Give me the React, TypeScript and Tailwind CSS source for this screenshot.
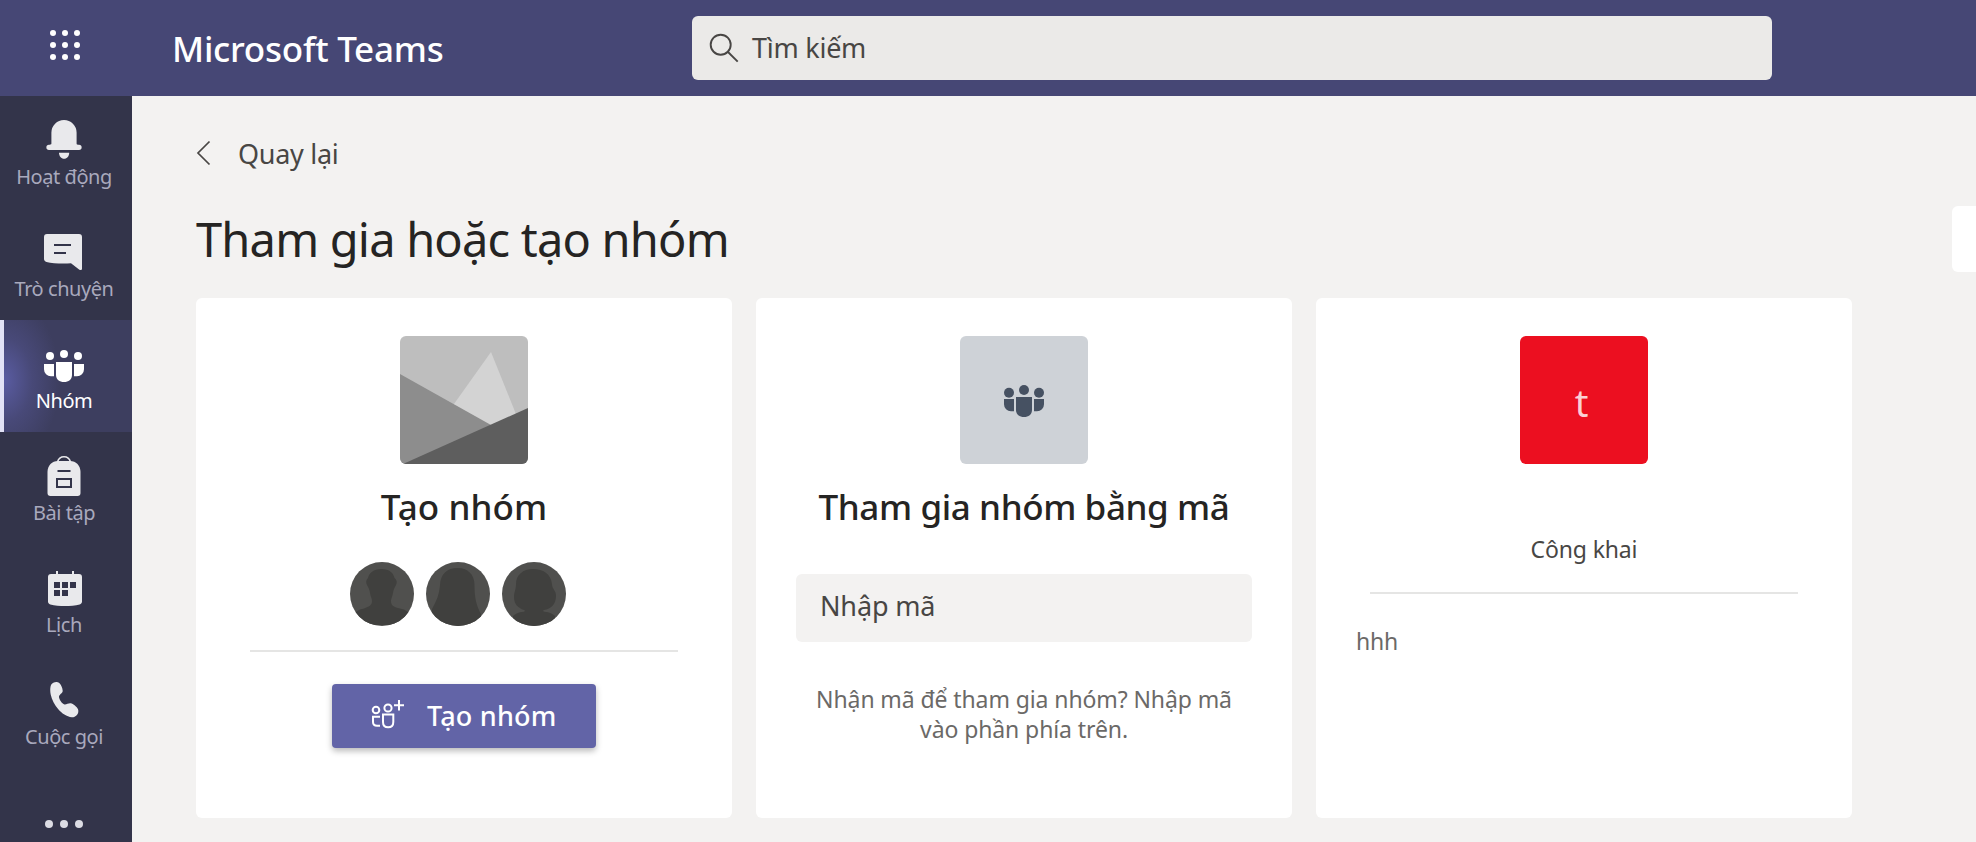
import React from 'react';

const ICON_COLOR = '#e9e9ec';
const ICON_CUT = '#33344a';

interface NavItemProps {
    label: string;
    icon: React.ReactNode;
    active?: boolean;
}

const BellIcon = () => (
    <svg width="40" height="44" viewBox="0 0 40 44" fill={ICON_COLOR}>
        <path d="M20 2A12.6 12.6 0 0 0 7.4 14.6V25.5c0 .8-.6 1.2-1.3 1.2H5a2.65 2.65 0 0 0 0 5.3h30a2.65 2.65 0 0 0 0-5.3h-1.1c-.7 0-1.3-.4-1.3-1.2V14.6A12.6 12.6 0 0 0 20 2z" />
        <path d="M15 34.7h10.2c0 3.4-2.2 6-5.1 6s-5.1-2.6-5.1-6z" />
    </svg>
);

const ChatIcon = () => (
    <svg width="40" height="44" viewBox="0 0 40 44" fill={ICON_COLOR}>
        <path d="M3 4h32a3 3 0 0 1 3 3v31.5c0 1.6-1.3 2-2.6 1.2L27 33.2C18 34 8.5 33.2 2.5 31.9 1 31.5 0 30.5 0 29V7a3 3 0 0 1 3-3z" />
        <path d="M10 15h17M10 23h12" stroke={ICON_CUT} strokeWidth="2" />
    </svg>
);

const TeamsIcon = ({ color, large }: { color: string; large?: boolean }) => (
    <svg width="40" height="44" viewBox="0 0 40 44" fill={color}>
        <circle cx={large ? 5 : 6} cy={large ? 15.7 : 14} r={large ? 5 : 4} />
        <circle cx="20" cy={large ? 13 : 12} r={large ? 5 : 4} />
        <circle cx={large ? 35 : 34} cy={large ? 15.7 : 14} r={large ? 5 : 4} />
        <path d="M0 22h10v12.3H7a7 7 0 0 1-7-7zM30 22h10v5.3a7 7 0 0 1-7 7h-3z" />
        <path d="M12 20h16v13c0 4.5-3.5 7-8 7s-8-2.5-8-7z" />
    </svg>
);

const BackpackIcon = () => (
    <svg width="40" height="44" viewBox="0 0 40 44" fill={ICON_COLOR}>
        <path d="M13.5 8c1-3.5 3.5-5.2 6.5-5.2s5.5 1.7 6.5 5.2" fill="none" stroke={ICON_COLOR} strokeWidth="1.6" />
        <path d="M14 7h12c6 0 10.5 4.500 10.500 11v21a3 3 0 0 1-3 3h-27a3 3 0 0 1-3-3V18C3.500 11.500 8 7 14 7z" />
        <path d="M15.5 7c.8-2 2.5-3 4.5-3s3.700 1 4.500 3z" fill={ICON_CUT} />
        <path d="M13.5 17h13M13 25h14v8H13z" fill="none" stroke={ICON_CUT} strokeWidth="2" />
    </svg>
);

const CalendarIcon = () => (
    <svg width="40" height="44" viewBox="0 0 40 44" fill={ICON_COLOR}>
        <path d="M12 5h2v3h14V5h2v3h5a3 3 0 0 1 3 3v24.5c0 1.5-.8 2.5-2.3 2.9-9 2.2-20.4 2.2-29.4 0C4.8 38 4 37 4 35.5V11a3 3 0 0 1 3-3h5z" />
        <path d="M10 16h6v6h-6zM18 16h6v6h-6zM26 16h6v6h-6zM10 24h6v6h-6zM18 24h6v6h-6z" fill={ICON_CUT} />
    </svg>
);

const PhoneIcon = () => (
    <svg width="40" height="44" viewBox="0 0 40 44" fill={ICON_COLOR}>
        <path d="M9.3 4.7c2-.9 4.6-.9 6 .2 1.8 1.5 3.2 5 3.4 7.8.1 2.6-3.7 3.7-3.7 6 0 2.4 2.8 6.7 5 7.6 2 .8 4.4-1.4 6.7-1 2.6.4 6.2 3.6 7.3 6 .8 1.9.2 4.6-1.3 6-1.3 1.3-3.2 2.2-5 2-4.8-.6-10.2-4-13.4-8C10.8 27.2 7.6 21.5 6.7 16.5 6.3 14 6 11.2 6.5 8.7c.3-1.6 1.3-3.4 2.8-4z" />
    </svg>
);

const NavItem: React.FC<NavItemProps> = ({ label, icon, active }) => (
    <button
        className={`relative flex h-28 w-full shrink-0 flex-col items-center pt-[22px] pr-1 ${
            active
                ? 'bg-[#3d3e5f] bg-[radial-gradient(ellipse_56px_84px_at_4px_60px,#5a5ca2_0%,#484978_50%,#3d3e5f_100%)] text-white'
                : 'text-[#a9a9bd]'
        }`}
    >
        {active && <span className="absolute inset-y-0 left-0 w-1 bg-[#e2e2f6]" />}
        {icon}
        <span className="mt-[1px] text-[20px] leading-[28px] tracking-[-0.45px] whitespace-nowrap">{label}</span>
    </button>
);

const Card = ({ children }: { children: React.ReactNode }) => (
    <section className="flex h-[520px] w-[536px] shrink-0 flex-col items-center rounded-md bg-white pt-[38px]">
        {children}
    </section>
);

const Avatar = ({ shape }: { shape: string }) => (
    <svg className="rounded-full" width="64" height="64" viewBox="0 0 64 64">
        <rect width="64" height="64" fill="#50504e" />
        <path d={shape} fill="#40403e" />
    </svg>
);

const AVATARS = [
    'M31.500 7c8 0 12 4 13 9 2.500 2 2.800 4.500 1.500 7-1.500 3-2.500 4-3 8-.4 3.500-2 5-2 8 0 5 3 6 9 7.500 5 1 7 2.500 9 4.500v12H5V51c2-2 4-3.500 9-4.500 5-2 8-3 8-7.500 0-3-1.600-4.500-2-8-.5-4-1.500-5-3-8-1.300-2.500-1-5 1-7 1-5 5.500-9 13.500-9z',
    'M31.5 6c10 0 17 6 17 17 0 12 1.5 20 6.5 29v12H6V47c5-9 7-14 8-24C14.5 12 21 6 31.5 6z',
    'M31 7c10 0 18 5 19 15 0 5 4 6 4 12 0 8-5 13-12 14-2 1 0 2 3 2 4 1 6 2 8 4v10H11V54c2-2 4-3 8-4 3 0 5-1 3-2-6-2-10-6-10-13 0-5 2-7 2-13C14 13 21 7 31 7z'
];

export default function App() {
    return (
        <div className="flex h-[842px] w-[1976px] flex-col overflow-hidden bg-[#f3f2f1] font-['Noto_Sans','Open_Sans',sans-serif]">
            {/* Top bar */}
            <header className="flex h-24 shrink-0 items-center bg-[#464775]">
                <div className="flex w-[132px] justify-center pb-[6px]">
                    <svg width="32" height="32" viewBox="0 0 32 32" fill="#fff">
                        {[4, 16, 28].map((y) => [3, 15, 27].map((x) => <circle key={`${x}-${y}`} cx={x} cy={y} r="3" />))}
                    </svg>
                </div>
                <h1 className="w-[560px] pt-0.5 pl-10 text-[35px] font-medium tracking-[-0.25px] text-white">Microsoft Teams</h1>
                <div className="flex h-16 w-[1080px] items-center rounded-md bg-[#ebeae8] pl-4 text-[#484644]">
                    <svg width="32" height="32" viewBox="0 0 32 32" fill="none" stroke="#484644" strokeWidth="1.9">
                        <circle cx="12.7" cy="12.7" r="10" />
                        <path d="M20 20l9.7 9.7" />
                    </svg>
                    <span className="ml-3 text-[27px] tracking-[-0.25px]">Tìm kiếm</span>
                </div>
            </header>

            <div className="flex min-h-0 flex-1">
                {/* App rail */}
                <nav className="flex w-[132px] shrink-0 flex-col overflow-hidden bg-[#33344a]">
                    <NavItem label="Hoạt động" icon={<BellIcon />} />
                    <NavItem label="Trò chuyện" icon={<ChatIcon />} />
                    <NavItem label="Nhóm" icon={<TeamsIcon color="#fff" />} active />
                    <NavItem label="Bài tập" icon={<BackpackIcon />} />
                    <NavItem label="Lịch" icon={<CalendarIcon />} />
                    <NavItem label="Cuộc gọi" icon={<PhoneIcon />} />
                    <div className="flex justify-center gap-[7px] pt-[52px] pr-1">
                        <span className="size-2 rounded-full bg-[#dcdce4]" />
                        <span className="size-2 rounded-full bg-[#dcdce4]" />
                        <span className="size-2 rounded-full bg-[#dcdce4]" />
                    </div>
                </nav>

                <main className="flex min-w-0 flex-1 flex-col pl-16">
                    <div className="mt-9 flex h-11 items-center text-[#484644]">
                        <svg width="16" height="28" viewBox="0 0 16 28" fill="none" stroke="#484644" strokeWidth="1.7">
                            <path d="M13.5 1.5L2 13l11.5 11.5" />
                        </svg>
                        <span className="ml-[26px] text-[27px] tracking-[-0.3px]">Quay lại</span>
                    </div>

                    <div className="mt-[30px] flex h-[66px] justify-between">
                        <h2 className="text-[47px] leading-[66px] tracking-[-0.8px] text-[#252423]">Tham gia hoặc tạo nhóm</h2>
                        <div className="h-[66px] w-6 rounded-l-md bg-white" />
                    </div>

                    <div className="mt-[26px] flex gap-6">
                        {/* Create team */}
                        <Card>
                            <svg className="rounded-md" width="128" height="128" viewBox="0 0 128 128">
                                <rect width="128" height="128" fill="#bebebe" />
                                <path d="M91 16L54 68v30h70z" fill="#d3d3d3" />
                                <path d="M0 38l91 51v39H0z" fill="#8d8d8d" />
                                <path d="M3 128L128 72v56z" fill="#5e5e5e" />
                            </svg>
                            <h3 className="mt-[19px] text-[35px] leading-[48px] font-medium tracking-[0.1px] text-[#252423]">Tạo nhóm</h3>
                            <div className="mt-[31px] mr-3 flex gap-3">
                                {AVATARS.map((shape) => <Avatar key={shape} shape={shape} />)}
                            </div>
                            <div className="mt-6 h-0.5 w-[428px] bg-[#e5e5e4]" />
                            <button className="mt-8 flex h-16 w-[264px] items-center rounded bg-[#6264a7] pl-[38px] text-white shadow-[0_3px_6px_rgba(0,0,0,0.28)]">
                                <svg width="36" height="36" viewBox="0 0 36 36" fill="none" stroke="#fff" strokeWidth="2">
                                    <circle cx="6" cy="12" r="3.3" />
                                    <circle cx="18" cy="10" r="3.6" />
                                    <path d="M29 2v10.6M24 7.2h10" />
                                    <path d="M10 18.7H3V24c0 2 1.5 3.7 4 3.7h3" />
                                    <path d="M13 16.5h10.3V24c0 3.5-2 5.3-5.15 5.3S13 27.5 13 24z" />
                                </svg>
                                <span className="ml-[21px] text-[27px] font-medium tracking-[0.2px]">Tạo nhóm</span>
                            </button>
                        </Card>

                        {/* Join with code */}
                        <Card>
                            <div className="flex size-32 justify-center rounded-md bg-[#ced2d7] pt-[41px]">
                                <TeamsIcon color="#465162" large />
                            </div>
                            <h3 className="mt-[19px] text-[35px] leading-[48px] font-medium tracking-[-0.4px] whitespace-nowrap text-[#252423]">
                                Tham gia nhóm bằng mã
                            </h3>
                            <div className="mt-[43px] flex h-[68px] w-[456px] items-center rounded-md bg-[#f3f2f1] pb-1 pl-6 text-[27px] tracking-[-0.15px] text-[#484644]">
                                Nhập mã
                            </div>
                            <p className="mt-[42px] text-center text-[23px] leading-[30px] tracking-[-0.1px] whitespace-nowrap text-[#6b6967]">
                                Nhận mã để tham gia nhóm? Nhập mã
                                <br />
                                vào phần phía trên.
                            </p>
                        </Card>

                        {/* Public team */}
                        <Card>
                            <div className="flex size-32 items-center justify-center rounded-md bg-[#ec0f20] pt-1 pr-[5px] text-[38px] text-[#fbd0d4]">t</div>
                            <div className="mt-[69px] text-[23px] leading-[32px] tracking-[-0.15px] text-[#484644]">Công khai</div>
                            <div className="mt-[27px] h-0.5 w-[428px] bg-[#e5e5e4]" />
                            <div className="mt-[31px] w-full pl-10 text-[23px] leading-[32px] tracking-[-0.2px] text-[#6b6967]">hhh</div>
                        </Card>
                    </div>
                </main>
            </div>
        </div>
    );
}
